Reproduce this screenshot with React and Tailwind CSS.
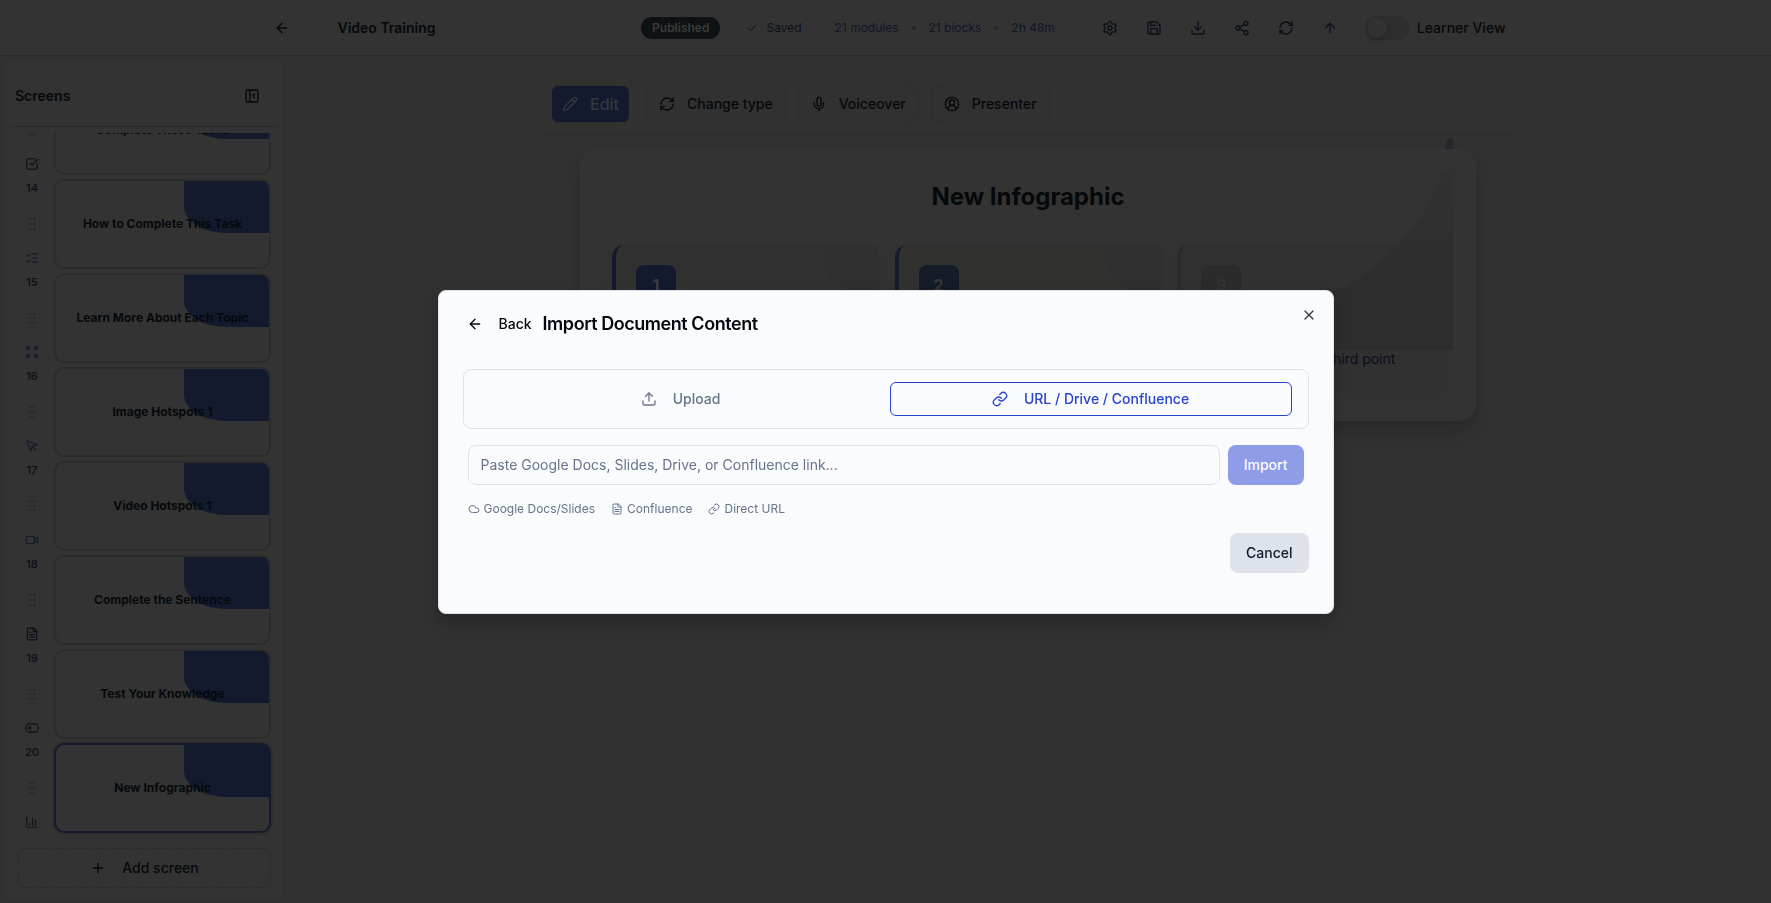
import {
  ArrowLeft,
  ArrowUp,
  ChartColumn,
  Check,
  CircleUserRound,
  Cloud,
  Download,
  Expand,
  FileText,
  GripVertical,
  Link,
  ListChecks,
  Mic,
  MousePointer,
  PanelLeftClose,
  Pencil,
  Plus,
  RefreshCw,
  Save,
  Settings,
  Share2,
  SquareCheckBig,
  Upload,
  Video,
  X,
} from "lucide-react"
import { useState } from "react"

function TogglePill({ className }) {
  return (
    <svg className={className} viewBox="0 0 24 24" fill="none" stroke="currentColor" strokeWidth="2">
      <rect x="1" y="5" width="22" height="14" rx="7" />
      <circle cx="8" cy="12" r="2" />
    </svg>
  )
}

const screens = [
  { id: 13, title: "Complete These Tasks", icon: SquareCheckBig, tone: "text-[#0b0f18]" },
  { id: 14, title: "How to Complete This Task", icon: ListChecks, tone: "text-[#131a2e]" },
  { id: 15, title: "Learn More About Each Topic", icon: Expand, tone: "text-[#131a2e]" },
  { id: 16, title: "Image Hotspots 1", icon: MousePointer, tone: "text-[#131a2e]" },
  { id: 17, title: "Video Hotspots 1", icon: Video, tone: "text-[#131a2e]" },
  { id: 18, title: "Complete the Sentence", icon: FileText, tone: "text-[#0b0f18]" },
  { id: 19, title: "Test Your Knowledge", icon: TogglePill, tone: "text-[#0b0f18]" },
  { id: 20, title: "New Infographic", icon: ChartColumn, tone: "text-[#121417]" },
]

const headerActions = [
  { label: "Settings", icon: Settings },
  { label: "Save", icon: Save },
  { label: "Download", icon: Download },
  { label: "Share", icon: Share2 },
  { label: "Refresh", icon: RefreshCw },
  { label: "Publish", icon: ArrowUp },
]

const toolbarActions = [
  { label: "Change type", icon: RefreshCw },
  { label: "Voiceover", icon: Mic },
  { label: "Presenter", icon: CircleUserRound },
]

const sources = [
  { label: "Google Docs/Slides", icon: Cloud },
  { label: "Confluence", icon: FileText },
  { label: "Direct URL", icon: Link },
]

function Header() {
  return (
    <header className="h-14 shrink-0 border-b border-[#2b2b2b] bg-[#333333]">
      <div className="mx-auto flex h-full max-w-7xl items-center justify-between px-5">
        <div className="flex items-center gap-10">
          <button aria-label="Go back" className="flex size-8 items-center justify-center">
            <ArrowLeft className="size-4" />
          </button>
          <h1 className="text-sm font-semibold">Video Training</h1>
        </div>

        <div className="flex items-center">
          <span className="rounded-full bg-[#0d1214] px-[11px] py-[3px] text-xs leading-4 font-semibold text-[#3a3b3c]">
            Published
          </span>
          <span className="ml-[26px] flex items-center gap-2 text-xs text-[#0b101c]">
            <Check className="size-3" />
            Saved
          </span>
          <div className="ml-[33px] flex items-center gap-[13px] text-xs text-[#10162a]">
            <span>21 modules</span>
            <span className="size-1 rounded-full bg-[#282828]" />
            <span>21 blocks</span>
            <span className="size-1 rounded-full bg-[#282828]" />
            <span>2h 48m</span>
          </div>
          <div className="ml-[37px] flex items-center gap-2">
            {headerActions.map((action) => (
              <button
                key={action.label}
                aria-label={action.label}
                className="flex h-9 w-9 items-center justify-center text-[#0a0f18]"
              >
                <action.icon className="size-4" />
              </button>
            ))}
          </div>
          <label className="ml-[17px] flex items-center gap-2 text-sm font-medium">
            <input type="checkbox" role="switch" className="peer sr-only" />
            <span className="flex h-6 w-11 items-center rounded-full bg-[#2d2d2d] p-0.5">
              <span className="size-5 rounded-full bg-[#323232] shadow-md" />
            </span>
            Learner View
          </label>
        </div>
      </div>
    </header>
  )
}

function ScreenItem({ screen, selected }) {
  return (
    <li className="flex h-[90px] shrink-0 gap-2">
      <div className="flex w-7 flex-col items-center justify-between pb-1">
        <span className="text-[11px] leading-[18px] font-medium text-[#0a0e16]">{screen.id}</span>
        <GripVertical className="size-4 text-[#25272c]" strokeWidth={1.5} />
        <screen.icon className={`size-[14px] ${screen.tone}`} />
      </div>
      <button
        className={`relative flex flex-1 items-center justify-center overflow-hidden rounded-[10px] border-2 text-xs font-bold ${
          selected ? "border-[#131a2e] ring-2 ring-[#2e2e2e]" : "border-[#2c2c2c]"
        }`}
      >
        <span className="absolute top-0 right-0 h-[60%] w-[40%] rounded-bl-[50%] bg-[#131a2e]" />
        <span className="relative">{screen.title}</span>
      </button>
    </li>
  )
}

function Sidebar() {
  return (
    <aside className="mt-[5px] mb-[5px] ml-[5px] flex w-[280px] shrink-0 flex-col border-r border-[#2d2d2d] bg-[#333333]">
      <div className="mx-[5px] flex h-[66px] shrink-0 items-center justify-between border-b border-[#2b2b2b] pt-1 pr-[19px] pl-[5px]">
        <h2 className="text-sm font-semibold">Screens</h2>
        <button aria-label="Collapse panel">
          <PanelLeftClose className="size-4" />
        </button>
      </div>
      <ul className="mt-[6px] flex min-h-0 flex-1 flex-col justify-end gap-1 overflow-hidden pr-[13px] pb-1 pl-[13px]">
        {screens.map((screen) => (
          <ScreenItem key={screen.id} screen={screen} selected={screen.id === 20} />
        ))}
      </ul>
      <button className="mx-[13px] mt-[11px] mb-[10px] flex h-10 shrink-0 items-center justify-center gap-4 rounded-lg border border-dashed border-[#2a2a2a] text-sm font-medium">
        <Plus className="size-4" />
        Add screen
      </button>
    </aside>
  )
}

function Toolbar() {
  return (
    <div className="flex items-center gap-3 border-b border-[#2b2b2b] px-[10px] pb-3">
      <button className="mr-[5px] flex h-9 items-center gap-3 rounded-md bg-[#131a2e] px-[10px] text-base font-medium text-[#36383e]">
        <Pencil className="size-4" />
        Edit
      </button>
      {toolbarActions.map((action) => (
        <button
          key={action.label}
          className="flex h-9 items-center gap-3 rounded-lg border border-[#2d2d2d] px-3 text-sm font-medium"
        >
          <action.icon className="size-4" />
          {action.label}
        </button>
      ))}
    </div>
  )
}

const points = [
  {
    number: 1,
    text: "Description for the first point",
    card: "border-[#131a2e] bg-[#313132]",
    badge: "bg-[#131a2e] text-[#3a3c42]",
  },
  {
    number: 2,
    text: "Description for the second point",
    card: "border-[#151b2c] bg-[#313230]",
    badge: "bg-[#161b28] text-[#34363a]",
  },
  {
    number: 3,
    text: "Description for the third point",
    card: "border-[#2b2b2b] bg-[#313131]",
    badge: "bg-[#2b2b2b] text-[#333333]",
  },
]

function Infographic() {
  return (
    <section className="relative mx-[38px] mt-[14px] rounded-2xl bg-[#333333] px-8 pt-8 pb-8 shadow-[0_10px_14px_2px_rgba(0,0,0,0.12)]">
      <h2 className="text-center text-2xl leading-8 font-bold">New Infographic</h2>
      <div className="mt-8 grid grid-cols-3 gap-4">
        {points.map((point) => (
          <div
            key={point.number}
            className={`relative overflow-hidden rounded-xl border-l-4 p-5 shadow-[0_4px_8px_rgba(0,0,0,0.08)] ${point.card}`}
          >
            <div className="absolute -top-8 -right-6 size-20 rounded-full bg-[#2f2f2f]" />
            <div className={`flex size-10 items-center justify-center rounded-lg text-base font-bold ${point.badge}`}>
              {point.number}
            </div>
            <h3 className="mt-4 text-base font-semibold">Point {point.number}</h3>
            <p className="mt-1 text-sm text-[#0a0f1c]">{point.text}</p>
          </div>
        ))}
      </div>
      {/* decorative wave over the top right corner */}
      <svg
        className="pointer-events-none absolute -top-[11px] right-[23px] h-[214px] w-[190px]"
        viewBox="0 0 190 214"
        fill="none"
      >
        <path d="M185 0h5v11h-9z" fill="#26272c" />
        <path d="M190 33l-10 1c-8 18-20 48-38 64c-28 36-60 56-142 80v34h190z" fill="url(#wave)" />
        <defs>
          <linearGradient id="wave" x1="0" y1="33" x2="0" y2="150" gradientUnits="userSpaceOnUse">
            <stop stopColor="#313131" />
            <stop offset="1" stopColor="#2d2d2d" />
          </linearGradient>
        </defs>
      </svg>
    </section>
  )
}

function ImportDialog() {
  const [url, setUrl] = useState("")

  return (
    <div className="fixed inset-0 flex items-center justify-center">
      <div
        role="dialog"
        aria-labelledby="import-title"
        className="relative w-full max-w-4xl rounded-lg border border-[#dfe3ec] bg-[#f9fbfd] p-6 text-[#05070f] shadow-[0_8px_16px_rgba(0,0,0,0.2)]"
      >
        <button aria-label="Close" className="absolute top-4 right-4 text-[#3c3f47]">
          <X className="size-4" />
        </button>

        <div className="flex h-[18px] items-center gap-[11px]">
          <button className="flex items-center gap-4 pl-1 text-sm font-medium">
            <ArrowLeft className="size-4" />
            Back
          </button>
          <h2 id="import-title" className="text-lg font-semibold tracking-tight">
            Import Document Content
          </h2>
        </div>

        <div className="mt-9 grid grid-cols-2 gap-2 rounded-lg border border-[#dfe3ec] px-4 py-3 text-sm font-medium">
          <button className="flex h-[34px] items-center justify-center gap-4 text-[#67748b]">
            <Upload className="size-4" />
            Upload
          </button>
          <button className="flex h-[34px] items-center justify-center gap-4 rounded-md border border-[#2743d2] text-[#2743d2]">
            <Link className="size-4" />
            URL / Drive / Confluence
          </button>
        </div>

        <div className="mt-4 flex gap-2 px-[5px]">
          <input
            type="text"
            aria-label="Document link"
            value={url}
            onChange={(e) => setUrl(e.target.value)}
            placeholder="Paste Google Docs, Slides, Drive, or Confluence link..."
            className="h-10 min-w-0 flex-1 rounded-lg border border-[#dfe3ec] px-3 text-sm placeholder:text-[#67748b]"
          />
          <button className="h-10 rounded-lg bg-[#8f9ce8] px-4 text-sm font-medium text-[#f9fbfd]">Import</button>
        </div>

        <div className="mt-4 flex gap-4 px-[5px] text-xs text-[#67748b]">
          {sources.map((source) => (
            <span key={source.label} className="flex items-center gap-1">
              <source.icon className="size-3" />
              {source.label}
            </span>
          ))}
        </div>

        <div className="mt-4 mb-4 flex justify-end">
          <button className="h-10 rounded-lg bg-[#dee2eb] px-4 text-sm font-medium text-[#12182a]">Cancel</button>
        </div>
      </div>
    </div>
  )
}

export default function App() {
  return (
    <div className="flex h-screen flex-col overflow-hidden bg-[#313131] font-[Inter,sans-serif] text-[#05090c]">
      <Header />
      <div className="flex min-h-0 flex-1">
        <Sidebar />
        <main className="min-w-0 flex-1 pt-[30px]">
          <div className="mx-auto max-w-[972px]">
            <Toolbar />
            <Infographic />
          </div>
        </main>
      </div>
      <ImportDialog />
    </div>
  )
}
